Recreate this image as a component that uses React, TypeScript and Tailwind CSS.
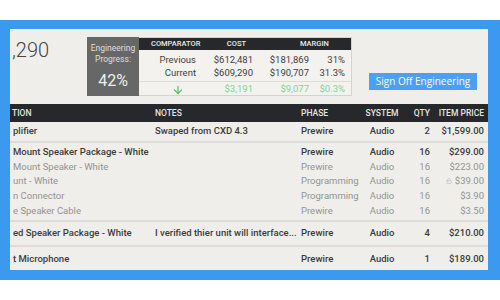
import React from "react";
import { ArrowDown, Lock } from "lucide-react";

interface Row {
  desc: string;
  notes?: string;
  phase: string;
  system: string;
  qty: string;
  price: string;
  sub?: boolean;
  locked?: boolean;
}

const cols = "grid grid-cols-[145px_146px_59px_44px_26px_58px]";

function TableRow({ row }: { row: Row }) {
  const tone = row.sub ? "text-[#939393]" : "text-[#3c3c3c] font-medium";
  return (
    <div className={`${cols} ${tone} h-[14.6px] items-center whitespace-nowrap`}>
      <div className="pl-[3px] overflow-hidden">{row.desc}</div>
      <div className="overflow-hidden">{row.notes}</div>
      <div>{row.phase}</div>
      <div className="text-center">{row.system}</div>
      <div className="text-right">{row.qty}</div>
      <div className="pr-[4px] flex items-center justify-end gap-[3px]">
        {row.locked && <Lock size={6} strokeWidth={3} className="text-[#c4c4c4]" />}
        {row.price}
      </div>
    </div>
  );
}

export default function App() {
  const group: Row[] = [
    { desc: "Mount Speaker Package - White", phase: "Prewire", system: "Audio", qty: "16", price: "$299.00" },
    { desc: "Mount Speaker - White", phase: "Prewire", system: "Audio", qty: "16", price: "$223.00", sub: true },
    { desc: "unt - White", phase: "Programming", system: "Audio", qty: "16", price: "$39.00", sub: true, locked: true },
    { desc: "n Connector", phase: "Programming", system: "Audio", qty: "16", price: "$3.90", sub: true },
    { desc: "e Speaker Cable", phase: "Prewire", system: "Audio", qty: "16", price: "$3.50", sub: true },
  ];

  return (
    <div className="w-[500px] h-[300px] bg-white pt-[20px] font-['Roboto',sans-serif]">
      <div className="h-[260px] bg-[#3b99f0] pl-[10px] pr-[12px] pt-[9px] pb-[10px]">
        <div className="h-full bg-[#efeeea] overflow-hidden flex flex-col">
          {/* ===== top summary ===== */}
          <div className="h-[75px] flex items-start shrink-0">
            <div className="w-[77px] pl-[2px] pt-[9px] text-[20px] font-light text-[#444] leading-[24px]">
              ,290
            </div>

            <div className="mt-[8px] w-[52px] h-[59px] bg-[#676767] text-center text-[#dedede]">
              <div className="pt-[6px] text-[8.5px] leading-[11px]">
                Engineering
                <br />
                Progress:
              </div>
              <div className="mt-[7px] text-[16px] leading-[18px] text-[#eeeeee]">42%</div>
            </div>

            <div className="mt-[8px] w-[213px] h-[59px] bg-[#f3f2ef] border border-[#d4d3cf] border-l-0 text-[9.5px] text-[#3f3f3f]">
              <div className="grid grid-cols-[61px_57px_56px_39px] h-[12px] bg-[#26282c] text-[#eaeaea] text-[7.5px] font-medium items-center leading-none">
                <div className="pl-[12px]">COMPARATOR</div>
                <div className="text-right pr-[11px]">COST</div>
                <div className="col-span-2 pl-[43px]">MARGIN</div>
              </div>
              <div className="pt-[3px] pb-[3px] border-b border-[#dcdbd7]">
                {[
                  ["Previous", "$612,481", "$181,869", "31%"],
                  ["Current", "$609,290", "$190,707", "31.3%"],
                ].map((r) => (
                  <div key={r[0]} className="grid grid-cols-[61px_57px_56px_39px] h-[12.5px] items-center">
                    <div className="text-right pr-[4px]">{r[0]}</div>
                    <div className="text-right pr-[4px]">{r[1]}</div>
                    <div className="text-right pr-[4px]">{r[2]}</div>
                    <div className="text-right pr-[7px]">{r[3]}</div>
                  </div>
                ))}
              </div>
              <div className="grid grid-cols-[61px_57px_56px_39px] h-[15px] items-center text-[#7ed497]">
                <div className="flex justify-end pr-[16px]">
                  <ArrowDown size={12} strokeWidth={2.5} className="text-[#55c56c]" />
                </div>
                <div className="text-right pr-[4px]">$3,191</div>
                <div className="text-right pr-[4px]">$9,077</div>
                <div className="text-right pr-[7px]">$0.3%</div>
              </div>
            </div>

            <button className="ml-[17px] mt-[44px] w-[108px] h-[17px] bg-[#4d9ff2] text-white text-[10px] font-['Open_Sans',sans-serif] leading-[17px]">
              Sign Off Engineering
            </button>
          </div>

          {/* ===== table header ===== */}
          <div className={`${cols} h-[18px] bg-[#26282c] text-[#e4e4e4] text-[8.5px] font-medium items-center shrink-0`}>
            <div className="pl-[2px]">TION</div>
            <div>NOTES</div>
            <div>PHASE</div>
            <div className="text-center">SYSTEM</div>
            <div className="text-right">QTY</div>
            <div className="text-right pr-[4px]">ITEM PRICE</div>
          </div>

          {/* ===== rows ===== */}
          <div className="text-[9.5px]">
            <div className="h-[21px] flex items-center border-b-2 border-[#dedcd8]">
              <div className="w-full">
                <TableRow
                  row={{ desc: "plifier", notes: "Swaped from CXD 4.3", phase: "Prewire", system: "Audio", qty: "2", price: "$1,599.00" }}
                />
              </div>
            </div>

            <div className="h-[79px] pt-[2px] border-b-2 border-[#dedcd8]">
              {group.map((r) => (
                <TableRow key={r.desc} row={r} />
              ))}
            </div>

            <div className="h-[25px] flex items-center border-b-2 border-[#dedcd8]">
              <div className="w-full">
                <TableRow
                  row={{
                    desc: "ed Speaker Package - White",
                    notes: "I verified thier unit will interface...",
                    phase: "Prewire",
                    system: "Audio",
                    qty: "4",
                    price: "$210.00",
                  }}
                />
              </div>
            </div>

            <div className="h-[24px] flex items-center">
              <div className="w-full">
                <TableRow
                  row={{ desc: "t Microphone", phase: "Prewire", system: "Audio", qty: "1", price: "$189.00" }}
                />
              </div>
            </div>
          </div>
        </div>
      </div>
    </div>
  );
}
